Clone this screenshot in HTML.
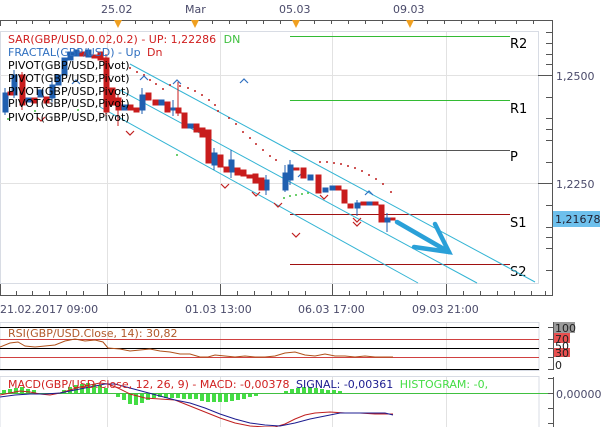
<!DOCTYPE html>
<html><head><meta charset="utf-8"><style>
html,body{margin:0;padding:0;background:#fff;}
svg{display:block;font-family:"DejaVu Sans","Liberation Sans",sans-serif;}
</style></head><body>
<svg width="610" height="427" viewBox="0 0 610 427" xmlns="http://www.w3.org/2000/svg">
<rect width="610" height="427" fill="#fff"/>
<!-- top axis -->
<line x1="0" y1="20.5" x2="552" y2="20.5" stroke="#555"/>
<g stroke="#555">
<line x1="0.5" y1="20" x2="0.5" y2="26"/><line x1="16.5" y1="20" x2="16.5" y2="24"/><line x1="32.5" y1="20" x2="32.5" y2="24"/><line x1="49.5" y1="20" x2="49.5" y2="24"/><line x1="66.5" y1="20" x2="66.5" y2="24"/><line x1="83.5" y1="20" x2="83.5" y2="24"/><line x1="101.5" y1="20" x2="101.5" y2="24"/><line x1="135.5" y1="20" x2="135.5" y2="24"/><line x1="152.5" y1="20" x2="152.5" y2="24"/><line x1="169.5" y1="20" x2="169.5" y2="24"/><line x1="212.5" y1="20" x2="212.5" y2="24"/><line x1="229.5" y1="20" x2="229.5" y2="24"/><line x1="246.5" y1="20" x2="246.5" y2="24"/><line x1="263.5" y1="20" x2="263.5" y2="24"/><line x1="280.5" y1="20" x2="280.5" y2="24"/><line x1="314.5" y1="20" x2="314.5" y2="24"/><line x1="331.5" y1="20" x2="331.5" y2="24"/><line x1="348.5" y1="20" x2="348.5" y2="24"/><line x1="365.5" y1="20" x2="365.5" y2="24"/><line x1="382.5" y1="20" x2="382.5" y2="24"/><line x1="427.5" y1="20" x2="427.5" y2="24"/><line x1="444.5" y1="20" x2="444.5" y2="24"/><line x1="461.5" y1="20" x2="461.5" y2="24"/><line x1="478.5" y1="20" x2="478.5" y2="24"/><line x1="495.5" y1="20" x2="495.5" y2="24"/><line x1="516.5" y1="20" x2="516.5" y2="24"/><line x1="533.5" y1="20" x2="533.5" y2="24"/><line x1="552.5" y1="20" x2="552.5" y2="30"/>
</g>
<g fill="#f0a020"><path d="M114 20h8l-4 8z"/><path d="M191 20h8l-4 8z"/><path d="M292 20h8l-4 8z"/><path d="M406 20h8l-4 8z"/></g>
<g font-size="11" fill="#4a4a6a"><text x="101" y="13">25.02</text><text x="185" y="13">Mar</text><text x="279" y="13">05.03</text><text x="393" y="13">09.03</text></g>

<!-- main plot box -->
<rect x="0.5" y="31.5" width="538" height="252" fill="#fff" stroke="#d8dce4"/>
<g stroke="#e2e2e2"><line x1="107.5" y1="32" x2="107.5" y2="295"/><line x1="220.5" y1="32" x2="220.5" y2="295"/><line x1="332.5" y1="32" x2="332.5" y2="295"/><line x1="446.5" y1="32" x2="446.5" y2="295"/><line x1="0" y1="75.5" x2="538" y2="75.5"/><line x1="0" y1="183.5" x2="538" y2="183.5"/></g>

<!-- pivots -->
<g stroke-width="1"><line x1="290" y1="36.5" x2="510" y2="36.5" stroke="#33bb33"/><line x1="290" y1="100.5" x2="510" y2="100.5" stroke="#33bb33"/><line x1="290" y1="150.5" x2="510" y2="150.5" stroke="#555"/><line x1="290" y1="214.5" x2="510" y2="214.5" stroke="#a01010"/><line x1="290" y1="264.5" x2="510" y2="264.5" stroke="#a01010"/></g>
<g font-size="13" fill="#000"><text x="510" y="48">R2</text><text x="510" y="113">R1</text><text x="510" y="161">P</text><text x="510" y="227">S1</text><text x="510" y="276">S2</text></g>

<!-- channel -->
<g stroke="#33b4d4" stroke-width="1" fill="none"><line x1="130" y1="64" x2="535" y2="282"/><line x1="120" y1="90" x2="477" y2="283"/><line x1="100" y1="107" x2="418" y2="283"/></g>

<!-- SAR dots -->
<g fill="#c02020">
<circle cx="130" cy="68" r="1"/><circle cx="137" cy="72" r="1"/><circle cx="144" cy="75" r="1"/><circle cx="150" cy="80" r="1"/><circle cx="156" cy="84" r="1"/><circle cx="163" cy="89" r="1"/><circle cx="170" cy="85" r="1"/><circle cx="180" cy="86" r="1"/><circle cx="188" cy="88" r="1"/><circle cx="195" cy="91" r="1"/><circle cx="202" cy="95" r="1"/><circle cx="209" cy="100" r="1"/><circle cx="215" cy="105" r="1"/><circle cx="218" cy="111" r="1"/><circle cx="229" cy="118" r="1"/><circle cx="236" cy="124" r="1"/><circle cx="243" cy="132" r="1"/><circle cx="250" cy="138" r="1"/><circle cx="256" cy="144" r="1"/><circle cx="263" cy="150" r="1"/><circle cx="270" cy="156" r="1"/><circle cx="276" cy="160" r="1"/>
<circle cx="320" cy="162" r="1"/><circle cx="327" cy="162" r="1"/><circle cx="334" cy="163" r="1"/><circle cx="341" cy="164" r="1"/><circle cx="348" cy="166" r="1"/><circle cx="355" cy="168" r="1"/><circle cx="362" cy="171" r="1"/><circle cx="369" cy="175" r="1"/><circle cx="376" cy="179" r="1"/><circle cx="383" cy="184" r="1"/><circle cx="391" cy="192" r="1"/>
</g>
<g fill="#40c040"><circle cx="8" cy="119" r="1"/><circle cx="35" cy="111" r="1"/><circle cx="78" cy="110" r="1"/><circle cx="177" cy="155" r="1"/><circle cx="284" cy="198" r="1"/><circle cx="290" cy="196" r="1"/><circle cx="296" cy="195" r="1"/><circle cx="302" cy="194" r="1"/><circle cx="308" cy="193" r="1"/></g>

<!-- fractals -->
<g fill="none" stroke-width="1.2">
<path d="M72 84l4-4 4 4M140 80l4-4 4 4M173 84l4-4 4 4M240 83l4-4 4 4M298 177l4-4 4 4M365 195l4-4 4 4" stroke="#3070c0"/>
<path d="M37 117l4 4 4-4M126 131l4 4 4-4M221 184l4 4 4-4M252 192l4 4 4-4M274 203l4 4 4-4M320 195l4 4 4-4M353 218l4 4 4-4M292 233l4 4 4-4M353 222l4 4 4-4" stroke="#c02020"/>
</g>

<!-- candles -->
<g stroke-width="1">
<g fill="#1f5fb0" stroke="#1f5fb0">
<line x1="5" y1="88" x2="5" y2="115"/><rect x="3" y="93" width="5" height="19"/>
<line x1="14" y1="70" x2="14" y2="98"/><rect x="12" y="75" width="5" height="20"/>
<rect x="26" y="98" width="5" height="4"/><rect x="38" y="90" width="5" height="7"/>
<line x1="52" y1="80" x2="52" y2="102"/><rect x="50" y="85" width="5" height="13"/>
<rect x="56" y="75" width="5" height="10"/><rect x="62" y="58" width="5" height="17"/>
<rect x="68" y="52" width="5" height="8"/><rect x="74" y="50" width="5" height="6"/><rect x="86" y="50" width="5" height="7"/>
<rect x="122" y="105" width="5" height="5"/><line x1="142" y1="88" x2="142" y2="114"/><rect x="140" y="95" width="5" height="15"/>
<rect x="159" y="100" width="5" height="5"/><rect x="171" y="108" width="5" height="2"/><line x1="173" y1="100" x2="173" y2="116"/>
<rect x="188" y="124" width="5" height="4"/><line x1="214" y1="148" x2="214" y2="170"/><rect x="212" y="153" width="5" height="12"/>
<line x1="231" y1="150" x2="231" y2="178"/><rect x="229" y="160" width="5" height="12"/>
<line x1="266" y1="175" x2="266" y2="195"/><rect x="264" y="180" width="5" height="10"/>
<line x1="285" y1="165" x2="285" y2="192"/><rect x="283" y="173" width="5" height="17"/>
<line x1="290" y1="160" x2="290" y2="185"/><rect x="288" y="165" width="5" height="15"/>
<rect x="308" y="175" width="5" height="5"/><rect x="323" y="188" width="5" height="4"/><rect x="330" y="186" width="5" height="4"/>
<line x1="357" y1="200" x2="357" y2="216"/><rect x="355" y="203" width="5" height="5"/><rect x="367" y="202" width="5" height="3"/>
<line x1="387" y1="213" x2="387" y2="232"/><rect x="385" y="218" width="5" height="4"/>
</g>
<g fill="#c81c1c" stroke="#c81c1c">
<rect x="8" y="92" width="5" height="3"/><line x1="22" y1="72" x2="22" y2="110"/><rect x="20" y="75" width="5" height="30"/>
<rect x="32" y="98" width="5" height="5"/><rect x="44" y="97" width="5" height="6"/><rect x="80" y="52" width="5" height="4"/>
<rect x="92" y="55" width="5" height="3"/><rect x="98" y="52" width="5" height="8"/>
<line x1="106" y1="54" x2="106" y2="116"/><rect x="104" y="58" width="5" height="54"/>
<rect x="110" y="88" width="5" height="17"/><line x1="118" y1="94" x2="118" y2="126"/><rect x="116" y="98" width="5" height="12"/>
<rect x="128" y="105" width="5" height="5"/><rect x="134" y="108" width="5" height="4"/><rect x="146" y="93" width="5" height="7"/>
<rect x="153" y="100" width="5" height="5"/><rect x="165" y="102" width="5" height="10"/><line x1="178" y1="82" x2="178" y2="116"/><rect x="176" y="108" width="5" height="5"/>
<rect x="182" y="113" width="5" height="15"/><rect x="194" y="124" width="5" height="8"/><rect x="200" y="128" width="5" height="9"/>
<rect x="206" y="130" width="5" height="33"/><rect x="218" y="155" width="5" height="12"/><rect x="224" y="167" width="5" height="5"/>
<rect x="235" y="168" width="5" height="7"/><rect x="241" y="170" width="5" height="6"/><rect x="247" y="175" width="5" height="3"/>
<rect x="253" y="174" width="5" height="9"/><rect x="259" y="178" width="5" height="12"/>
<rect x="294" y="168" width="5" height="2"/><rect x="301" y="168" width="5" height="10"/><rect x="316" y="175" width="5" height="18"/>
<rect x="336" y="186" width="5" height="4"/><rect x="342" y="190" width="5" height="13"/><rect x="348" y="204" width="5" height="4"/>
<rect x="361" y="202" width="5" height="3"/><rect x="373" y="202" width="5" height="3"/><rect x="379" y="205" width="5" height="17"/><rect x="391" y="218" width="4" height="2"/>
</g>
</g>

<!-- arrow -->
<g stroke="#2aa0d8" stroke-width="4.5" stroke-linecap="round" fill="none"><line x1="397" y1="222" x2="449" y2="252"/><polyline points="435,224 449,252 414,247"/></g>

<!-- legend -->
<g font-size="11">
<text x="8" y="43" fill="#d02020">SAR(GBP/USD,0.02,0.2) -  UP: 1,22286 <tspan fill="#40c040" dx="4">DN</tspan></text>
<text x="8" y="56" fill="#3070c0">FRACTAL(GBP/USD) -  Up  <tspan fill="#d02020" dx="3">Dn</tspan></text>
<text x="8" y="69" fill="#000">PIVOT(GBP/USD,Pivot)</text>
<text x="8" y="82" fill="#000">PIVOT(GBP/USD,Pivot)</text>
<text x="8" y="95" fill="#000">PIVOT(GBP/USD,Pivot)</text>
<text x="8" y="107" fill="#000">PIVOT(GBP/USD,Pivot)</text>
<text x="8" y="121" fill="#000">PIVOT(GBP/USD,Pivot)</text>
</g>

<!-- right price axis -->
<line x1="552.5" y1="20" x2="552.5" y2="295" stroke="#555"/>
<g stroke="#555"><line x1="538" y1="75.5" x2="552" y2="75.5"/><line x1="538" y1="183.5" x2="552" y2="183.5"/>
<line x1="546" y1="32.5" x2="552" y2="32.5"/><line x1="546" y1="43.5" x2="552" y2="43.5"/><line x1="546" y1="54.5" x2="552" y2="54.5"/><line x1="546" y1="64.5" x2="552" y2="64.5"/><line x1="546" y1="97.5" x2="552" y2="97.5"/><line x1="546" y1="118.5" x2="552" y2="118.5"/><line x1="546" y1="129.5" x2="552" y2="129.5"/><line x1="546" y1="140.5" x2="552" y2="140.5"/><line x1="546" y1="162.5" x2="552" y2="162.5"/><line x1="546" y1="205.5" x2="552" y2="205.5"/><line x1="546" y1="227.5" x2="552" y2="227.5"/><line x1="546" y1="237.5" x2="552" y2="237.5"/><line x1="546" y1="248.5" x2="552" y2="248.5"/><line x1="546" y1="270.5" x2="552" y2="270.5"/></g>
<g font-size="11" fill="#4a4a6a"><text x="556" y="80">1,2500</text><text x="556" y="188">1,2250</text></g>
<rect x="553" y="211" width="47" height="16" fill="#6ec0ec"/>
<text x="555" y="223" font-size="11" fill="#223">1,21678</text>

<!-- bottom axis -->
<line x1="0" y1="295.5" x2="553" y2="295.5" stroke="#555"/>
<path d="M0.5 284v11M107.5 284v11M220.5 284v11M332.5 284v11M446.5 284v11M16.5 291v4M32.5 291v4M49.5 291v4M66.5 291v4M83.5 291v4M124.5 291v4M141.5 291v4M158.5 291v4M175.5 291v4M192.5 291v4M237.5 291v4M254.5 291v4M271.5 291v4M288.5 291v4M305.5 291v4M349.5 291v4M366.5 291v4M383.5 291v4M400.5 291v4M417.5 291v4M463.5 291v4M480.5 291v4M497.5 291v4M514.5 291v4M531.5 291v4M545.5 291v4" stroke="#555"/>
<g font-size="11" fill="#4a4a6a"><text x="0" y="313">21.02.2017 09:00</text><text x="185" y="313">01.03 13:00</text><text x="298" y="313">06.03 17:00</text><text x="412" y="313">09.03 21:00</text></g>

<!-- RSI -->
<rect x="0" y="322.5" width="539" height="48" fill="#fff" stroke="#d8dce4"/>
<g stroke="#e2e2e2"><line x1="107.5" y1="323" x2="107.5" y2="370"/><line x1="220.5" y1="323" x2="220.5" y2="370"/><line x1="332.5" y1="323" x2="332.5" y2="370"/><line x1="446.5" y1="323" x2="446.5" y2="370"/></g>
<line x1="0" y1="327.5" x2="539" y2="327.5" stroke="#000"/>
<line x1="0" y1="339.5" x2="539" y2="339.5" stroke="#d04040"/>
<line x1="0" y1="348.5" x2="539" y2="348.5" stroke="#000"/>
<line x1="0" y1="357.5" x2="539" y2="357.5" stroke="#d04040"/>
<line x1="0" y1="369.5" x2="539" y2="369.5" stroke="#000"/>
<polyline fill="none" stroke="#b0501a" points="0,347 10,343 18,342 25,346 35,347 45,346 55,345 65,341 75,339 85,341 95,340 103,342 108,348 120,349 130,351 140,350 150,349 160,351 170,352 180,354 190,354 200,357 208,357 215,355 225,356 235,357 245,356 255,357 265,357 275,356 285,353 295,352 305,355 315,356 325,354 335,356 345,356 355,357 365,356 375,357 385,357 393,357"/>
<text x="8" y="337" font-size="11" fill="#b05a2a">RSI(GBP/USD.Close, 14): 30,82</text>
<line x1="553.5" y1="322" x2="553.5" y2="370" stroke="#555"/>
<path d="M548 327.5h6M548 339.5h6M548 348.5h6M548 357.5h6M548 369.5h6" stroke="#555"/>
<rect x="554" y="322" width="21" height="11" fill="#9a9a9a"/>
<rect x="554" y="333" width="16" height="10" fill="#e85050"/>
<rect x="554" y="348" width="16" height="9" fill="#e85050"/>
<g font-size="11" fill="#222"><text x="555" y="332">100</text><text x="555" y="343">70</text><text x="555" y="350">50</text><text x="555" y="357">30</text><text x="555" y="369">0</text></g>

<!-- MACD -->
<rect x="0" y="376.5" width="539" height="52" fill="#fff" stroke="#d8dce4"/>
<g stroke="#e2e2e2"><line x1="107.5" y1="377" x2="107.5" y2="427"/><line x1="220.5" y1="377" x2="220.5" y2="427"/><line x1="332.5" y1="377" x2="332.5" y2="427"/><line x1="446.5" y1="377" x2="446.5" y2="427"/></g>
<line x1="0" y1="393.5" x2="553" y2="393.5" stroke="#40c040"/>
<g fill="#44dd44">
<rect x="2" y="390" width="4" height="3"/><rect x="8" y="389" width="4" height="4"/><rect x="14" y="388" width="4" height="5"/><rect x="20" y="387" width="4" height="6"/><rect x="26" y="389" width="4" height="4"/><rect x="32" y="390" width="4" height="3"/>
<rect x="62" y="390" width="4" height="3"/><rect x="68" y="387" width="4" height="6"/><rect x="74" y="385" width="4" height="8"/><rect x="80" y="384" width="4" height="9"/><rect x="86" y="383" width="4" height="10"/><rect x="92" y="384" width="4" height="9"/><rect x="98" y="385" width="4" height="8"/><rect x="104" y="388" width="4" height="5"/>
<rect x="116" y="394" width="4" height="3"/><rect x="122" y="394" width="4" height="6"/><rect x="128" y="394" width="4" height="10"/><rect x="134" y="394" width="4" height="11"/><rect x="140" y="394" width="4" height="9"/><rect x="146" y="394" width="4" height="6"/><rect x="152" y="394" width="4" height="4"/><rect x="158" y="394" width="4" height="3"/><rect x="164" y="394" width="4" height="4"/><rect x="170" y="394" width="4" height="4"/><rect x="176" y="394" width="4" height="4"/><rect x="182" y="394" width="4" height="5"/><rect x="188" y="394" width="4" height="5"/><rect x="194" y="394" width="4" height="5"/><rect x="200" y="394" width="4" height="7"/><rect x="206" y="394" width="4" height="8"/><rect x="212" y="394" width="4" height="8"/><rect x="218" y="394" width="4" height="8"/><rect x="224" y="394" width="4" height="8"/><rect x="230" y="394" width="4" height="7"/><rect x="236" y="394" width="4" height="6"/><rect x="242" y="394" width="4" height="5"/><rect x="248" y="394" width="4" height="3"/><rect x="254" y="394" width="4" height="2"/>
<rect x="284" y="391" width="4" height="2"/><rect x="290" y="389" width="4" height="4"/><rect x="296" y="388" width="4" height="5"/><rect x="302" y="387" width="4" height="6"/><rect x="308" y="387" width="4" height="6"/><rect x="314" y="388" width="4" height="5"/><rect x="320" y="389" width="4" height="4"/><rect x="326" y="390" width="4" height="3"/><rect x="332" y="390" width="4" height="3"/><rect x="338" y="391" width="4" height="2"/>
</g>
<polyline fill="none" stroke="#c02020" points="0,395 10,393 20,391 30,392 40,394 50,395 60,393 70,390 80,387 90,385 100,383 108,384 118,388 130,394 145,398 160,399 175,400 190,406 205,412 220,418 235,423 250,426 265,427 275,427 285,424 295,419 305,415 315,413 330,412 345,413 360,413 375,414 385,414 393,414"/>
<polyline fill="none" stroke="#1c1c90" points="0,397 15,395 30,394 45,394 60,393 75,390 90,387 105,384 115,384 130,388 145,392 160,396 175,400 190,403 205,408 220,414 235,419 250,423 265,425 280,426 295,423 310,419 325,416 340,413 355,413 370,413 385,413 393,415"/>
<text x="8" y="388" font-size="11" fill="#d02020">MACD(GBP/USD.Close, 12, 26, 9) -  MACD: -0,00378  <tspan fill="#1c1c90" dx="3">SIGNAL: -0,00361</tspan>  <tspan fill="#44dd44" dx="3">HISTOGRAM: -0,</tspan></text>
<line x1="553.5" y1="377" x2="553.5" y2="427" stroke="#555"/>
<path d="M548 378.5h6M548 393.5h6M548 408.5h6M548 423.5h6" stroke="#555"/>
<text x="556" y="398" font-size="11" fill="#4a4a6a">0,00000</text>
</svg>
</body></html>
